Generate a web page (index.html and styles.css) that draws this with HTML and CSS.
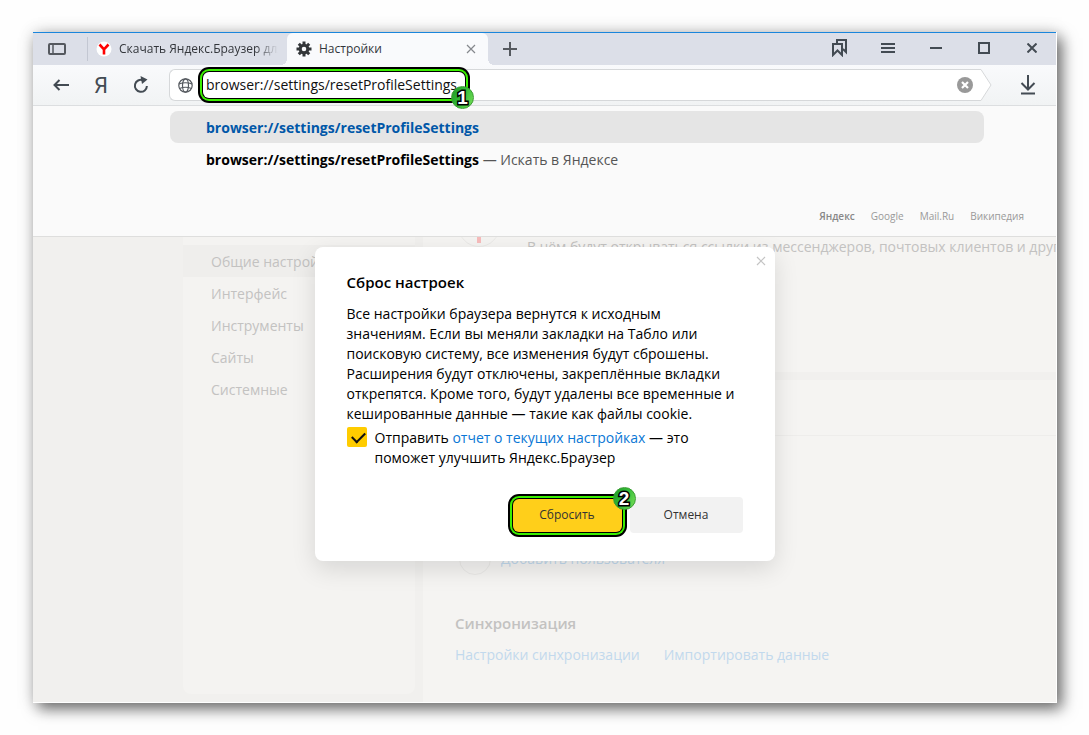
FILE: index.html
```html
<!DOCTYPE html>
<html lang="ru">
<head>
<meta charset="utf-8">
<meta name="viewport" content="width=device-width, initial-scale=1">
<title>Настройки</title>
<link rel="stylesheet" href="styles.css">
</head>
<body>
<div class="window">
  <header class="tabbar">
    <button class="panel-btn" aria-label="Панель">
      <svg width="18" height="12" viewBox="0 0 18 12" fill="none" stroke="#55595f" stroke-width="2"><rect x="1" y="1" width="16" height="10" rx="1"/><path d="M5 1v10" stroke-width="1.5"/></svg>
    </button>
    <div class="tab">
      <svg width="16" height="16" viewBox="0 0 16 16"><circle cx="8" cy="8" r="7.5" fill="#fff"/><path d="M3.500 3.500L8 8.300L12.500 3.500M8 8v5.500" fill="none" stroke="#f00" stroke-width="2.600"/></svg>
      <span class="tab-title faded">Скачать Яндекс.Браузер для</span>
    </div>
    <div class="tab active">
      <svg width="16" height="16" viewBox="-8 -8 16 16"><circle r="3.8" fill="none" stroke="#333639" stroke-width="3"/><g stroke="#333639" stroke-width="3"><path d="M0-7.5V-4M0 7.5V4M-7.5 0H-4M7.5 0H4"/><path d="M-5.2-5.2L-3-3M5.2 5.2L3 3M-5.2 5.2L-3 3M5.2-5.2L3-3"/></g></svg>
      <span class="tab-title">Настройки</span>
      <button class="tab-close" aria-label="Закрыть вкладку"><svg width="10" height="10" viewBox="0 0 10 10" stroke="#85888d" stroke-width="1.2"><path d="M1 1l8 8M9 1L1 9"/></svg></button>
    </div>
    <button class="new-tab" aria-label="Новая вкладка"><svg width="14" height="14" viewBox="0 0 14 14" stroke="#55595f" stroke-width="2"><path d="M7 0v14M0 7h14"/></svg></button>
    <div class="window-controls">
      <button aria-label="Закладки"><svg width="16" height="18" viewBox="0 0 16 18" fill="none" stroke="#434b53" stroke-width="2"><path d="M1 5h9v11l-4.500-4.500L1 16z"/><path d="M5 4V1h9v12l-3-3"/></svg></button>
      <button aria-label="Меню"><svg width="14" height="10" viewBox="0 0 14 10" stroke="#434b53" stroke-width="2"><path d="M0 1h14M0 5h14M0 9h14"/></svg></button>
      <button aria-label="Свернуть"><svg width="12" height="2" viewBox="0 0 12 2"><path fill="#434b53" d="M0 0h12v2H0z"/></svg></button>
      <button aria-label="Развернуть"><svg width="12" height="12" viewBox="0 0 12 12" fill="none" stroke="#434b53" stroke-width="2"><path d="M1 1h10v10H1z"/></svg></button>
      <button aria-label="Закрыть"><svg width="10" height="10" viewBox="0 0 10 10" stroke="#434b53" stroke-width="2"><path d="M.5.5l9 9M9.500.5l-9 9"/></svg></button>
    </div>
  </header>

  <div class="toolbar">
    <button class="tool" aria-label="Назад"><svg width="16" height="12" viewBox="0 0 16 12" fill="none" stroke="#434b53" stroke-width="2"><path d="M16 6H1.500M6.500 1L1.500 6L6.500 11"/></svg></button>
    <button class="tool ya">Я</button>
    <button class="tool" aria-label="Обновить"><svg width="16" height="18" viewBox="0 0 16 18" fill="none" stroke="#434b53" stroke-width="2"><path d="M10 4.200A6 6 0 1 0 13.900 10"/><path d="M7.500 0L14.500 3.500L9 8z" fill="#434b53" stroke="none"/></svg></button>
    <div class="address">
      <div class="address-body">
        <svg width="15" height="15" viewBox="0 0 15 15" fill="none" stroke="#55595f" stroke-width="1.200"><circle cx="7.500" cy="7.500" r="6.700"/><ellipse cx="7.500" cy="7.500" rx="3" ry="6.700"/><path d="M1 6q6.500-2.500 13 0M1.500 10.500q6-2.500 12 0"/></svg>
        <div class="url-field">
          <input type="text" aria-label="Адрес" value="browser://settings/resetProfileSettings">
          <span class="badge badge-url">1</span>
        </div>
        <button class="clear" aria-label="Очистить"><svg width="16" height="16" viewBox="0 0 16 16"><circle cx="8" cy="8" r="8" fill="#999"/><path d="M5 5l6 6M11 5l-6 6" stroke="#fff" stroke-width="2.200"/></svg></button>
      </div>
      <svg class="address-end" width="12" height="32" viewBox="0 0 12 32"><path d="M0 .5h1L11 16L1 31.500H0" fill="#fff" stroke="#d6d8da"/></svg>
    </div>
    <button class="tool" aria-label="Загрузки"><svg width="16" height="20" viewBox="0 0 16 20" fill="none" stroke="#434b53" stroke-width="2"><path d="M8 0v14M1.500 8L8 14.500L14.500 8M1 18.500h14"/></svg></button>
  </div>

  <div class="suggest">
    <a class="suggest-row selected" href="#"><b>browser://settings/resetProfileSettings</b></a>
    <a class="suggest-row" href="#"><b>browser://settings/resetProfileSettings</b> — Искать в Яндексе</a>
    <nav class="engines"><a class="current" href="#">Яндекс</a><a href="#">Google</a><a href="#">Mail.Ru</a><a href="#">Википедия</a></nav>
  </div>

  <main class="page">
    <nav class="sidebar">
      <a class="current" href="#">Общие настройки</a>
      <a href="#">Интерфейс</a>
      <a href="#">Инструменты</a>
      <a href="#">Сайты</a>
      <a href="#">Системные</a>
    </nav>
    <div class="content">
      <section class="card default-browser">
        <svg width="42" height="42" viewBox="0 0 42 42"><circle cx="21" cy="21" r="20.500" fill="none" stroke="#eae9e7"/><path d="M19 20h4v18h-4z" fill="#f7bcbc"/></svg>
        <p>В чём будут открываться ссылки из мессенджеров, почтовых клиентов и других программ</p>
      </section>
      <section class="card users">
        <div class="card-head"></div>
        <div class="add-user">
          <svg width="32" height="32" viewBox="0 0 32 32" fill="none" stroke="#eae9e7"><circle cx="16" cy="16" r="15.500"/></svg>
          <a href="#">Добавить пользователя</a>
        </div>
        <h2>Синхронизация</h2>
        <div class="sync-links"><a href="#">Настройки синхронизации</a><a href="#">Импортировать данные</a></div>
      </section>
    </div>

    <div class="overlay">
      <div class="dialog" role="dialog" aria-labelledby="dialog-title">
        <button class="dialog-close" aria-label="Закрыть"><svg width="10" height="10" viewBox="0 0 10 10" stroke="#c4c4c4" stroke-width="1.200"><path d="M1 1l8 8M9 1L1 9"/></svg></button>
        <h1 id="dialog-title">Сброс настроек</h1>
        <p>Все настройки браузера вернутся к исходным<br>значениям. Если вы меняли закладки на Табло или<br>поисковую систему, все изменения будут сброшены.<br>Расширения будут отключены, закреплённые вкладки<br>открепятся. Кроме того, будут удалены все временные и<br>кешированные данные — такие как файлы cookie.</p>
        <div class="report">
          <input type="checkbox" id="report" checked>
          <label for="report">Отправить <a href="#">отчет о текущих настройках</a> — это<br>поможет улучшить Яндекс.Браузер</label>
        </div>
        <div class="actions">
          <div class="primary-wrap">
            <button class="primary">Сбросить</button>
            <span class="badge badge-reset">2</span>
          </div>
          <button class="secondary">Отмена</button>
        </div>
      </div>
    </div>
  </main>
</div>
</body>
</html>
```

FILE: styles.css
```css
* { box-sizing: border-box; }
body {
  margin: 0;
  min-height: 100vh;
  display: flex;
  padding: 32px 32px 32px 33px;
  background: #fefefe;
  font: 14px/20px "Open Sans", "Noto Sans", sans-serif;
  color: #000;
}
button {
  display: flex;
  align-items: center;
  justify-content: center;
  padding: 0;
  border: 0;
  background: none;
  font: inherit;
  color: inherit;
}
a { color: inherit; text-decoration: none; }
svg { display: block; flex: none; }
h1, h2, p { margin: 0; }

.window {
  flex: 1;
  min-width: 0;
  display: flex;
  flex-direction: column;
  border: solid #fff;
  border-width: 0 1px 1px 0;
  background: #fafafa;
  box-shadow: 5px 6px 14px rgba(0, 0, 0, .55), 0 0 16px rgba(0, 0, 0, .14);
}

/* Tabs */
.tabbar {
  display: flex;
  height: 33px;
  border-top: 1px solid #1a86dc;
  background: #dcdfe8;
  font-size: 12px;
  color: #33363b;
}
.panel-btn { width: 48px; }
.tab {
  display: flex;
  align-items: center;
  width: 201px;
  gap: 7px;
  padding: 0 9px;
  position: relative;
}
.tab:not(.active)::before {
  content: "";
  position: absolute;
  left: 6px;
  top: 4px;
  height: 24px;
  border-left: 1px solid #c3c7d2;
}
.tab:not(.active) { padding-left: 15px; width: 206px; }
.tab-title {
  flex: 1;
  overflow: hidden;
  white-space: nowrap;
}
.faded { mask-image: linear-gradient(to right, #000 86%, transparent 100%); }
.tab.active {
  padding-right: 12px;
  border-radius: 6px 6px 0 0;
  background: #f9fafc;
}
.tab.active::before,
.tab.active::after {
  content: "";
  position: absolute;
  bottom: 0;
  width: 6px;
  height: 6px;
}
.tab.active::before { right: 100%; background: radial-gradient(circle at 0 0, transparent 6px, #f9fafc 6px); }
.tab.active::after { left: 100%; background: radial-gradient(circle at 100% 0, transparent 6px, #f9fafc 6px); }
.new-tab { width: 44px; }
.window-controls { display: flex; margin-left: auto; }
.window-controls button { width: 48px; padding-bottom: 2px; }

/* Address bar */
.toolbar {
  display: flex;
  align-items: center;
  height: 41px;
  padding: 0 8px;
  border-bottom: 1px solid #dcdee0;
  background: linear-gradient(#f9fafc, #f1f3f4);
}
.tool { width: 40px; height: 40px; }
.ya { font: 22px "Liberation Sans Narrow", "Roboto", sans-serif; color: #434b53; }
.address { flex: 1; display: flex; margin: 0 16px 0 8px; }
.address-body {
  flex: 1;
  display: flex;
  align-items: center;
  height: 32px;
  padding: 0 6px 0 8px;
  border: 1px solid #d6d8da;
  border-right: 0;
  border-radius: 6px 0 0 6px;
  background: #fff;
}
.url-field { position: relative; margin-left: 10px; }
.url-field input {
  display: block;
  width: 262px;
  height: 26px;
  padding: 0 0 2px 3px;
  border: 0;
  outline: 0;
  border-radius: 6px;
  background: #fff;
  font: inherit;
  color: #111;
}
.url-field input,
.primary { box-shadow: 0 0 0 1px #000, 0 0 0 3px #3bf000, 0 0 0 5px #000; }
.clear { margin-left: auto; width: 18px; height: 28px; }

.badge {
  position: absolute;
  width: 23px;
  height: 23px;
  border: 1px solid #3b9d33;
  border-radius: 50%;
  background: linear-gradient(115deg, #1f9a2a, #35bd38 50%, #7be05a);
  font: bold 19px/21px "Liberation Sans", sans-serif;
  text-align: center;
  color: #fff;
  -webkit-text-stroke: 3px #000;
  paint-order: stroke fill;
}
.badge-url { right: -9px; bottom: -11px; }
.badge-reset { right: -14px; top: -12px; }

/* Suggestions */
.suggest {
  padding: 5px 32px 10px 137px;
  border-bottom: 1px solid #dededd;
}
.suggest-row {
  display: block;
  margin-right: 40px;
  padding: 7px 36px 5px;
  border-radius: 8px;
  color: #555;
}
.suggest-row b { color: #000; }
.selected { background: #e5e5e5; }
.selected b { color: #0057a8; }
.engines {
  display: flex;
  justify-content: flex-end;
  gap: 16px;
  margin-top: 31px;
  font-size: 10px;
  color: #999;
}
.engines .current { font-weight: 600; color: #888; }

/* Settings page */
.page {
  position: relative;
  flex: 1;
  display: flex;
  gap: 8px;
  overflow: hidden;
  padding-left: 150px;
  background: #f1f0ee;
  color: #c3c2c1;
}
.sidebar {
  width: 232px;
  margin-bottom: 8px;
  padding-top: 8px;
  border-radius: 0 0 8px 8px;
  background: #f4f3f1;
}
.sidebar a { display: block; padding: 7px 28px 5px; }
.sidebar .current { background: #efeeec; }
.content {
  flex: 1;
  min-width: 0;
  display: flex;
  flex-direction: column;
  gap: 8px;
}
.card { background: #f5f4f2; overflow: hidden; }
.default-browser {
  display: flex;
  align-items: flex-start;
  gap: 27px;
  height: 135px;
  padding-left: 35px;
}
.default-browser svg { margin-top: -32px; }
.default-browser p { white-space: nowrap; }
.users { flex: 1; padding-left: 32px; }
.card-head { height: 56px; margin-left: -32px; border-bottom: 1px solid #eeedeb; }
.add-user {
  display: flex;
  align-items: center;
  gap: 10px;
  margin: 107px 0 38px 4px;
}
.card a { color: #c2d9ed; }
.users h2 { font-size: 15px; line-height: 20px; font-weight: 600; }
.sync-links { display: flex; gap: 24px; margin: 12px 0 32px; }

/* Dialog */
.overlay {
  position: absolute;
  inset: 0;
  display: flex;
  align-items: flex-start;
  justify-content: center;
  padding-top: 10px;
}
.dialog {
  position: relative;
  width: 460px;
  padding: 25px 32px 28px;
  border-radius: 8px;
  background: #fff;
  box-shadow: 0 8px 24px rgba(0, 0, 0, .12);
  color: #000;
}
.dialog-close { position: absolute; top: 4px; right: 4px; width: 20px; height: 20px; }
.dialog h1 { margin-bottom: 12px; font-size: 15px; line-height: 20px; font-weight: 600; }
.dialog p { margin-bottom: 3px; white-space: nowrap; }
.report { display: flex; align-items: flex-start; gap: 8px; white-space: nowrap; }
.report label { padding-top: 1px; }
.report input {
  appearance: none;
  width: 20px;
  height: 20px;
  margin: 0;
  border-radius: 2px;
  background: #fc0;
}
.report input:checked::before {
  content: "";
  display: block;
  width: 11px;
  height: 6px;
  margin: 5px 0 0 5px;
  border: solid #111;
  border-width: 0 0 2px 2px;
  transform: rotate(-45deg);
}
.report a { color: #0a77d5; }
.actions {
  display: flex;
  align-items: center;
  justify-content: flex-end;
  gap: 8px;
  margin-top: 29px;
  font-size: 12px;
  color: #333;
}
.primary-wrap { position: relative; }
.primary { width: 109px; height: 33px; border-radius: 6px; background: #ffcf1a; }
.secondary { width: 113px; height: 36px; border-radius: 4px; background: #f2f2f2; }
```
